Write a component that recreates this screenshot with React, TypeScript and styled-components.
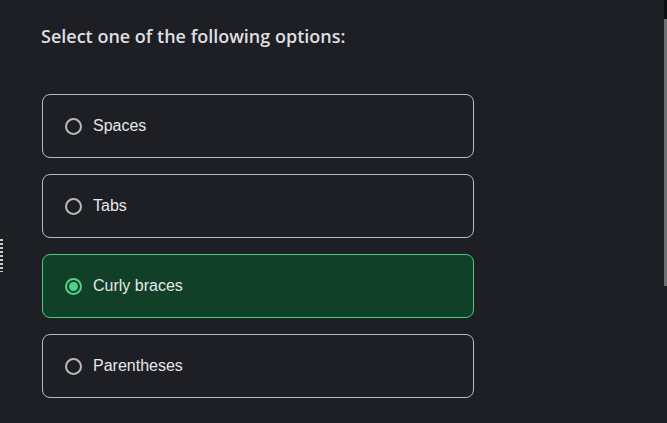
import React, { FC, useState } from "react"
import styled, { createGlobalStyle } from "styled-components"

const GlobalStyle = createGlobalStyle`
html, body {
   margin: 0;
   padding: 0;
   background: #1e1f24;
   overflow: hidden;
}
* { box-sizing: border-box; }
`

const StyledPage = styled.div`
width: 667px;
height: 423px;
padding: 24px 0 0 42px;
position: relative;
`

const StyledTitle = styled.h2`
margin: 0 0 46px -1px;
font-family: "Open Sans", sans-serif;
font-weight: 600;
font-size: 18px;
line-height: 24px;
color: #dedfe1;
`

const StyledList = styled.div`
display: flex;
flex-direction: column;
gap: 16px;
width: 432px;
`

const StyledOption = styled.label<{ $active: boolean }>`
display: flex;
align-items: center;
gap: 11px;
height: 64px;
padding: 0 0 0 22px;
border-radius: 8px;
border: 1px solid ${p => p.$active ? "#3fcf7e" : "#b3bec4"};
background: ${p => p.$active ? "#113f28" : "transparent"};
cursor: pointer;
`

const StyledRadio = styled.span<{ $active: boolean }>`
width: 17px;
height: 17px;
border-radius: 50%;
border: 2px solid ${p => p.$active ? "#4fd38a" : "#b9babc"};
display: flex;
align-items: center;
justify-content: center;
&::after {
   content: "";
   width: 9px;
   height: 9px;
   border-radius: 50%;
   background: #4fd38a;
   display: ${p => p.$active ? "block" : "none"};
}
`

const StyledLabel = styled.span`
font-family: "Liberation Sans", Arial, sans-serif;
font-size: 16px;
color: #e6e7e9;
`

const StyledScroll = styled.div`
position: absolute;
top: 0;
right: 0;
width: 3px;
height: 423px;
display: flex;
flex-direction: column;
`

const StyledScrollTrack = styled.div`
height: 19px;
background: #0d0e10;
`

const StyledScrollThumb = styled.div`
height: 267px;
background: #6e6f72;
`

const StyledHandle = styled.div`
position: absolute;
left: 0;
top: 239px;
width: 3px;
height: 33px;
background: repeating-linear-gradient(to bottom, #c8c9cc 0 2px, transparent 2px 4px);
`

const options = ["Spaces", "Tabs", "Curly braces", "Parentheses"]

const App: FC = () => {
   const [selected, setSelected] = useState<number>(2)
   return (
      <>
         <GlobalStyle />
         <StyledPage>
            <StyledTitle>Select one of the following options:</StyledTitle>
            <StyledList>
               {options.map((o, i) => (
                  <StyledOption key={o} $active={selected === i} onClick={() => setSelected(i)}>
                     <StyledRadio $active={selected === i} />
                     <StyledLabel>{o}</StyledLabel>
                  </StyledOption>
               ))}
            </StyledList>
            <StyledHandle />
            <StyledScroll>
               <StyledScrollTrack />
               <StyledScrollThumb />
            </StyledScroll>
         </StyledPage>
      </>
   )
}

export default App
